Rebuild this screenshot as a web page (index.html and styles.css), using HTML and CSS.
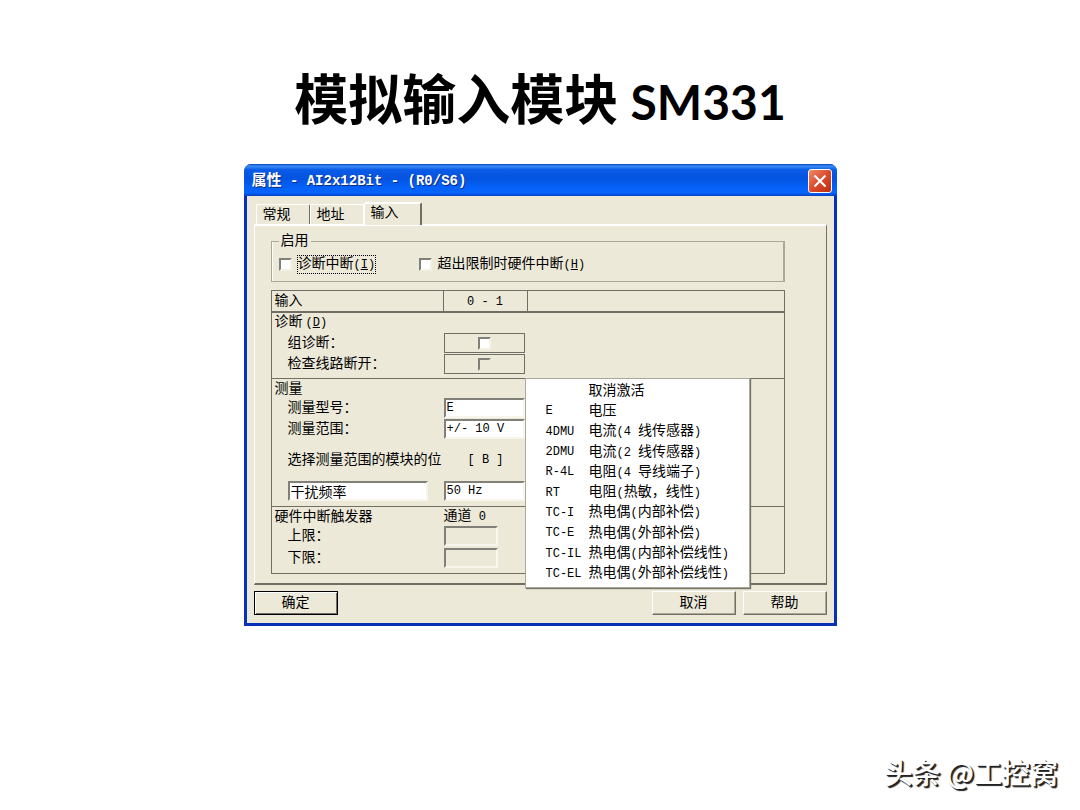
FILE: index.html
```html
<!DOCTYPE html>
<html lang="zh-CN">
<head>
<meta charset="utf-8">
<title>模拟输入模块 SM331</title>
<link rel="stylesheet" href="styles.css">
</head>
<body>
<main class="slide">
  <h1 class="slide-title">模拟输入模块 <span class="model">SM331</span></h1>

  <section class="dialog" role="dialog" aria-labelledby="dialog-title">
    <header class="titlebar">
      <h2 class="titlebar-text" id="dialog-title">属性<span class="title-latin"> - AI2x12Bit - (R0/S6)</span></h2>
      <button class="close" type="button" aria-label="关闭">
        <svg viewBox="0 0 24 24" aria-hidden="true"><path d="M6 6L18 18M18 6L6 18"/></svg>
      </button>
    </header>

    <form class="dialog-body">
      <div class="tabs" role="tablist">
        <button class="tab" type="button" role="tab">常规</button>
        <button class="tab" type="button" role="tab">地址</button>
        <button class="tab active" type="button" role="tab" aria-selected="true">输入</button>
      </div>

      <div class="panel" role="tabpanel">
        <fieldset class="enable">
          <legend>启用</legend>
          <label class="option"><input class="check" type="checkbox"><span class="focused">诊断中断<span class="la">(<u>I</u>)</span></span></label>
          <label class="option"><input class="check" type="checkbox"><span>超出限制时硬件中断<span class="la">(<u>H</u>)</span></span></label>
        </fieldset>

        <div class="params-wrap">
          <table class="params">
            <colgroup><col class="col-name"><col class="col-value"><col></colgroup>
            <thead>
              <tr><th>输入</th><th class="channel"><span class="la">0 - 1</span></th><th></th></tr>
            </thead>
            <tbody>
              <tr class="group-row"><th colspan="3">诊断<span class="la gap">(<u>D</u>)</span></th></tr>
              <tr class="row-check"><td><label for="group-diag">组诊断：</label></td><td><span class="check-cell"><input class="check" id="group-diag" type="checkbox"></span></td><td></td></tr>
              <tr class="row-check-last"><td><label for="wire-break">检查线路断开：</label></td><td><span class="check-cell"><input class="check" id="wire-break" type="checkbox" disabled></span></td><td></td></tr>
            </tbody>
            <tbody>
              <tr class="group-row"><th colspan="3">测量</th></tr>
              <tr class="row-field"><td><label for="type">测量型号：</label></td><td><input class="field" id="type" type="text" value="E"></td><td></td></tr>
              <tr class="row-check"><td><label for="range">测量范围：</label></td><td><input class="field" id="range" type="text" value="+/- 10 V"></td><td></td></tr>
              <tr class="row-position"><td>选择测量范围的模块的位</td><td class="channel"><span class="la">[ B ]</span></td><td></td></tr>
              <tr class="row-last"><td><input class="field name-field" type="text" value="干扰频率" aria-label="参数"></td><td><input class="field" type="text" value="50 Hz" aria-label="干扰频率"></td><td></td></tr>
            </tbody>
            <tbody>
              <tr class="group-row"><th>硬件中断触发器</th><th class="channel-name">通道<span class="la"> 0</span></th><th></th></tr>
              <tr class="group-row"><td><label for="upper">上限：</label></td><td><input class="field limit" id="upper" type="text" disabled></td><td></td></tr>
              <tr class="row-last"><td><label for="lower">下限：</label></td><td><input class="field limit" id="lower" type="text" disabled></td><td></td></tr>
            </tbody>
          </table>

          <div class="menu" role="menu">
            <button class="item" type="button" role="menuitem"><span class="la"></span><span>取消激活</span></button>
            <button class="item" type="button" role="menuitem"><span class="la">E</span><span>电压</span></button>
            <button class="item" type="button" role="menuitem"><span class="la">4DMU</span><span>电流<span class="la">(4 </span>线传感器<span class="la">)</span></span></button>
            <button class="item" type="button" role="menuitem"><span class="la">2DMU</span><span>电流<span class="la">(2 </span>线传感器<span class="la">)</span></span></button>
            <button class="item" type="button" role="menuitem"><span class="la">R-4L</span><span>电阻<span class="la">(4 </span>导线端子<span class="la">)</span></span></button>
            <button class="item" type="button" role="menuitem"><span class="la">RT</span><span>电阻<span class="la">(</span>热敏，线性<span class="la">)</span></span></button>
            <button class="item" type="button" role="menuitem"><span class="la">TC-I</span><span>热电偶<span class="la">(</span>内部补偿<span class="la">)</span></span></button>
            <button class="item" type="button" role="menuitem"><span class="la">TC-E</span><span>热电偶<span class="la">(</span>外部补偿<span class="la">)</span></span></button>
            <button class="item" type="button" role="menuitem"><span class="la">TC-IL</span><span>热电偶<span class="la">(</span>内部补偿线性<span class="la">)</span></span></button>
            <button class="item" type="button" role="menuitem"><span class="la">TC-EL</span><span>热电偶<span class="la">(</span>外部补偿线性<span class="la">)</span></span></button>
          </div>
        </div>
      </div>

      <footer class="actions">
        <button class="btn default" type="button">确定</button>
        <button class="btn" type="button">取消</button>
        <button class="btn" type="button">帮助</button>
      </footer>
    </form>
  </section>

  <p class="credit">头条 @工控窝</p>
</main>
</body>
</html>
```

FILE: styles.css
```css
* { box-sizing: border-box; }

body {
  margin: 0;
  background: #fff;
  color: #000;
  font-family: "Liberation Mono", "Noto Sans CJK SC", monospace;
  font-size: 14px;
  line-height: 18px;
}

button, input { font: inherit; color: inherit; }

.slide {
  display: flex;
  flex-direction: column;
  align-items: center;
  min-height: 100vh;
  padding: 61px 22px 20px;
}

.slide-title {
  margin: 0 0 26px;
  font: 700 54px/72px "Noto Sans CJK SC", sans-serif;
}
.model { font-family: Lato, sans-serif; font-size: 48px; }

.dialog {
  width: 100%;
  max-width: 593px;
  border: 3px solid #0831b8;
  border-top: 0;
  border-radius: 8px 8px 0 0;
  background: #ece9d8;
}

.titlebar {
  display: flex;
  align-items: center;
  justify-content: space-between;
  height: 32px;
  margin: 0 -3px;
  padding: 2px 5px 0 8px;
  border-radius: 7px 7px 0 0;
  background: linear-gradient(#0a47c0, #3b8cf5 7%, #0a5be6 18%, #0453e0 45%, #0562fa 75%, #0665ff 90%, #0640bd);
}
.titlebar-text {
  margin: 0;
  color: #fff;
  font-size: 15px;
  font-weight: 700;
  text-shadow: 1px 1px 0 #0a2c86;
  white-space: pre;
}
.title-latin { font-size: 14px; }
.close {
  width: 24px;
  height: 24px;
  padding: 0;
  border: 1px solid #fff;
  border-radius: 3px;
  background: linear-gradient(135deg, #ee8a70, #dc4a2c 50%, #b9300f);
}
.close svg { display: block; width: 22px; height: 22px; fill: none; stroke: #fff; stroke-width: 2.4; }

.dialog-body { padding: 6px 7px 8px; }

.tabs {
  display: flex;
  align-items: flex-end;
  padding-left: 2px;
}
.tab {
  width: 54px;
  height: 20px;
  padding: 0 0 0 6px;
  border: 1px solid #fff;
  border-width: 1px 1px 0 1px;
  border-right-color: #716f64;
  border-radius: 2px 2px 0 0;
  background: none;
  text-align: left;
}
.tab:nth-child(2) { border-right-color: #fff; }
.tab.active {
  width: 58px;
  height: 23px;
  margin-bottom: -1px;
  padding-bottom: 4px;
  border-top-width: 2px;
  border-right: 2px solid #716f64;
  background: #ece9d8;
}

.panel {
  padding: 7px 41px 9px 16px;
  border: 1px solid #716f64;
  border-top: 2px solid #fff;
  border-left-color: #fff;
  border-bottom-width: 2px;
}

.enable {
  display: flex;
  margin: 0 0 8px;
  padding: 6px 7px 7px;
  border: 1px solid #aca899;
  border-right-width: 2px;
  box-shadow: inset 1px 0 0 #fff;
}
.enable legend { height: 16px; padding: 0 2px; line-height: 16px; }
.option { display: flex; align-items: center; gap: 6px; flex: 0 0 140px; white-space: nowrap; }
.focused { outline: 1px dotted #000; line-height: 16px; }

.la { font-size: 12px; white-space: pre; }
.gap { margin-left: 3px; }

.check {
  appearance: none;
  width: 13px;
  height: 13px;
  margin: 0;
  border: 2px solid;
  border-color: #808078 #f4f2e8 #f4f2e8 #808078;
  background: #fff;
}
.check:disabled { background: #ece9d8; border-color: #808078 #ece9d8 #ece9d8 #808078; }

.params-wrap { position: relative; }
.params {
  width: 100%;
  table-layout: fixed;
  border-collapse: separate;
  border-spacing: 0;
  border: 1px solid #716f64;
  border-bottom: 0;
}
.col-name { width: 172px; }
.col-value { width: 84px; }
.params th, .params td { padding: 0; font-weight: 400; text-align: left; white-space: nowrap; }
.params th:first-child { padding-left: 3px; }
.params td:first-child { padding-left: 16px; }
.params thead th { height: 22px; border-bottom: 2px solid #716f64; border-right: 1px solid #716f64; }
.params thead th:last-child { border-right: 0; }
.params tbody tr:last-child td { border-bottom: 1px solid #716f64; }
.params .channel { text-align: center; }
.group-row { height: 19px; }
.row-field { height: 20px; }
.row-check { height: 22px; }
.row-check-last { height: 25px; }
.row-position { height: 39px; }
.row-last { height: 28px; }
.params .row-last td, .params .row-check-last td { padding-bottom: 4px; }

.check-cell {
  display: flex;
  align-items: center;
  justify-content: center;
  width: 81px;
  height: 20px;
  border: 1px solid #716f64;
}
.field {
  display: block;
  width: 81px;
  height: 20px;
  padding: 0 0 0 1px;
  border: 2px solid;
  border-color: #808078 #f8f6ec #f8f6ec #808078;
  border-radius: 0;
  background: #fff;
  font-size: 12px;
}
.name-field { width: 140px; font-size: 14px; }
.limit { width: 54px; background: #ece9d8; }

.menu {
  position: absolute;
  top: 88px;
  left: 254px;
  display: grid;
  grid-auto-rows: 1fr;
  width: 225px;
  height: 210px;
  padding: 2px 0 3px;
  border: 1px solid #aca899;
  background: #fff;
  box-shadow: 1px 1px 1px #77756b;
}
.item {
  display: grid;
  grid-template-columns: 43px 1fr;
  align-items: center;
  padding: 0 0 0 20px;
  border: 0;
  background: none;
  text-align: left;
  white-space: nowrap;
}

.actions { display: flex; gap: 7px; padding-top: 6px; }
.btn {
  width: 84px;
  height: 24px;
  padding: 0;
  border: 1px solid;
  border-color: #fff #716f64 #716f64 #fff;
  background: #ece9d8;
  box-shadow: inset -1px -1px 0 #aca899;
}
.btn.default { margin-right: auto; border-color: #000; box-shadow: inset 1px 1px 0 #fff, inset -1px -1px 0 #716f64; }

.credit {
  align-self: flex-end;
  margin: auto 0 0;
  color: #fff;
  font: 500 28px/36px "Noto Sans CJK SC", sans-serif;
  text-shadow: 1px 1px 0 #222, 2px 2px 1px #222;
}
```
